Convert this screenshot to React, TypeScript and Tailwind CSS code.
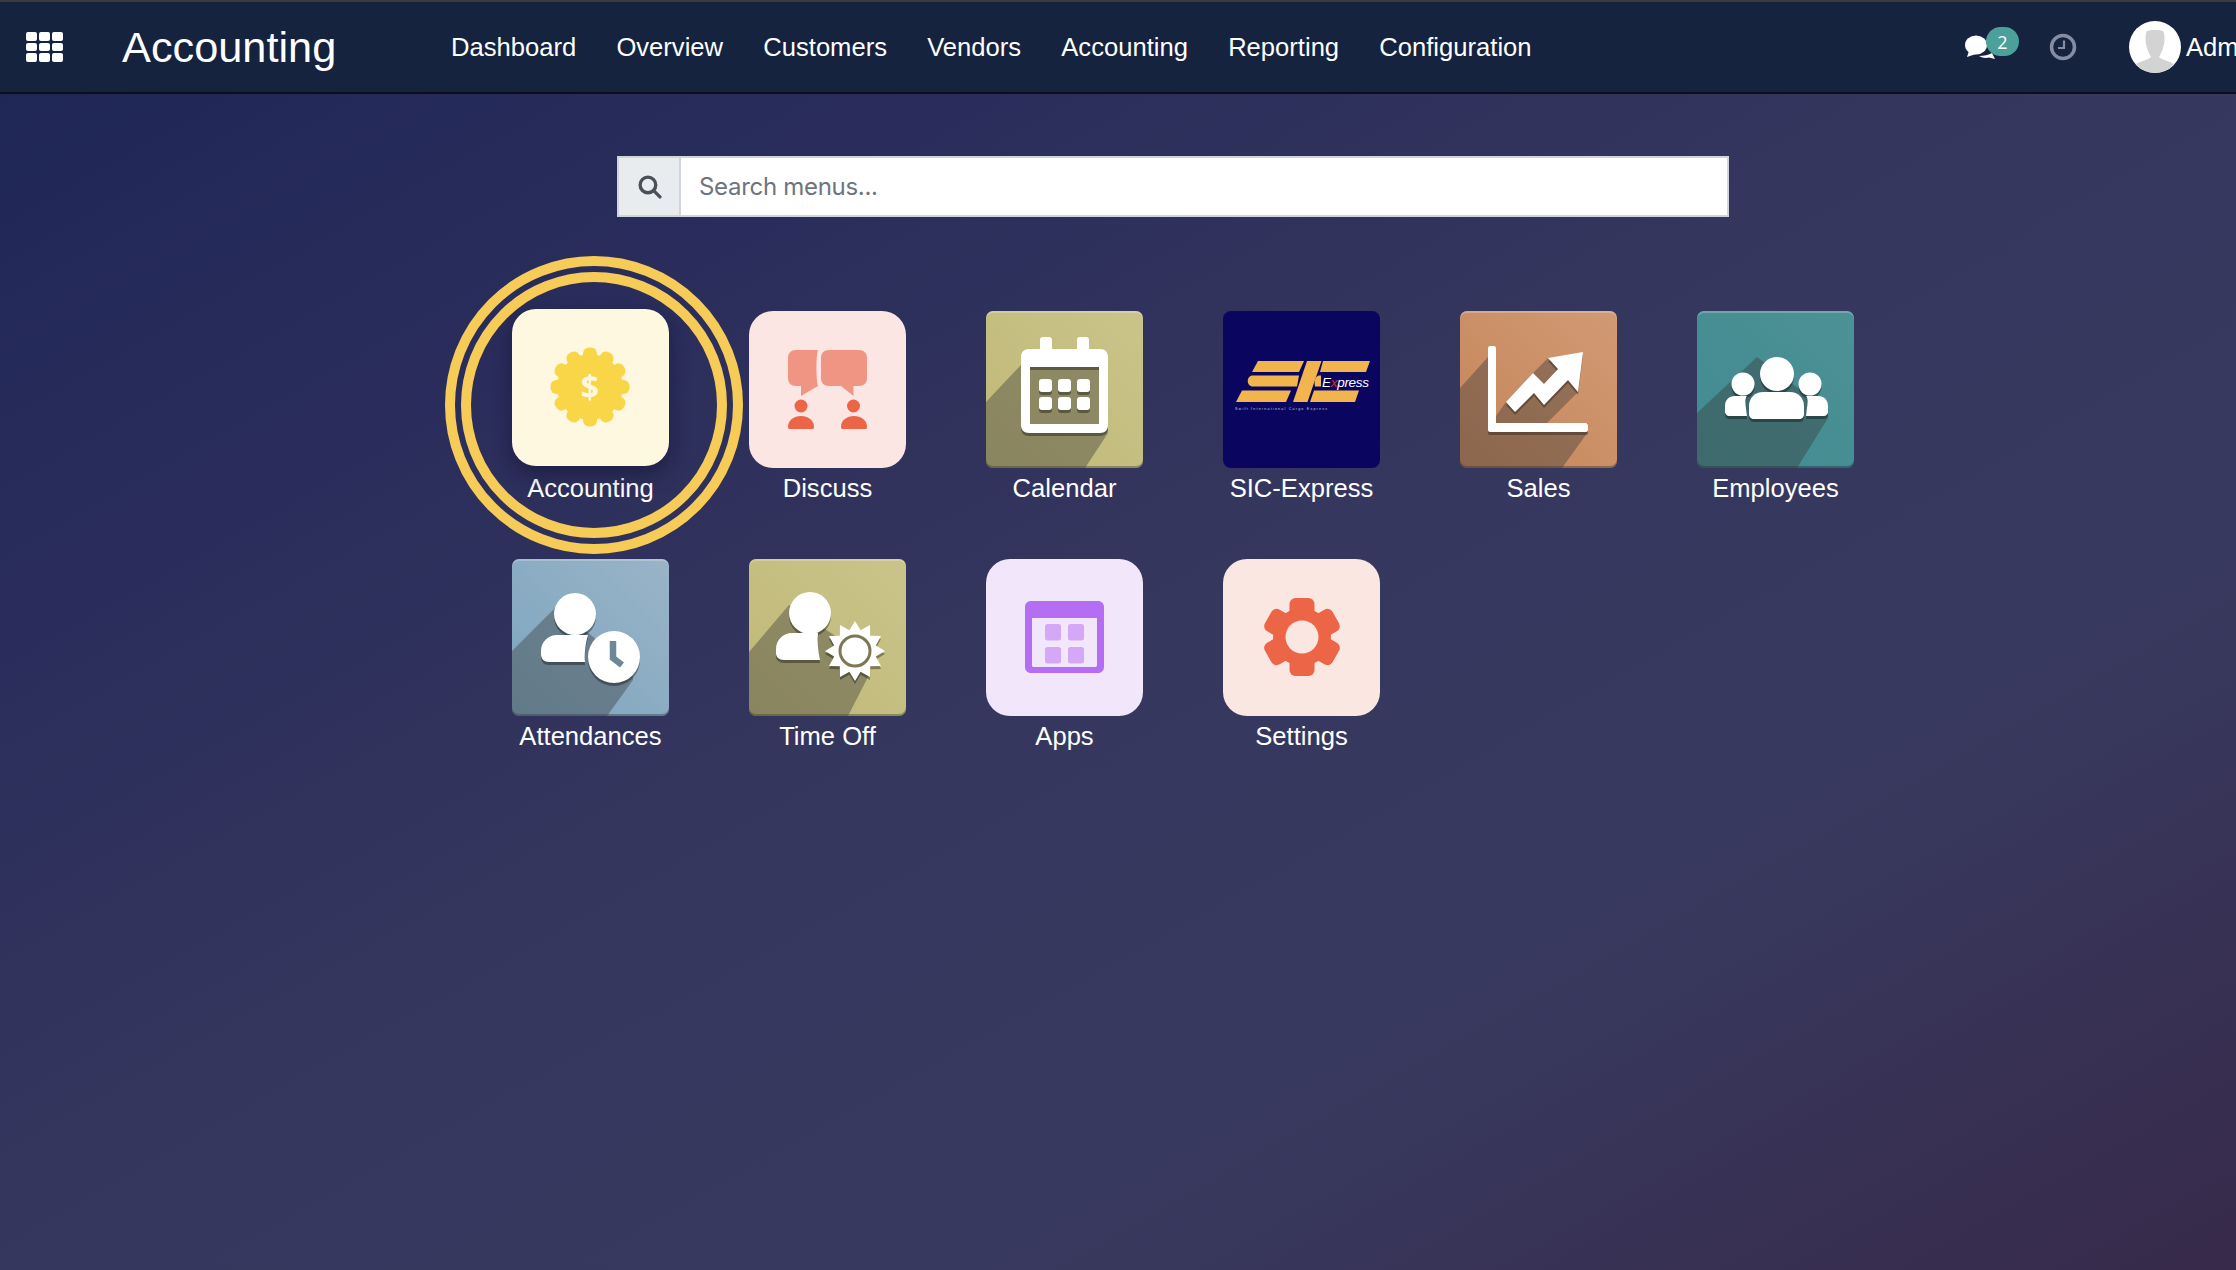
import React from "react";

const range = (n: number) => Array.from({ length: n }, (_, i) => i);

function Lifted({ children, dy = 3, opacity = 0.35 }: { children: React.ReactNode; dy?: number; opacity?: number }) {
  return (
    <>
      <g transform={`translate(0,${dy})`} fill="#000" fillOpacity={opacity}>{children}</g>
      <g fill="#fff">{children}</g>
    </>
  );
}

function Shadow({ points, opacity = 0.4 }: { points: string; opacity?: number }) {
  return <polygon points={points} fill="#3a3a3a" fillOpacity={opacity} />;
}

function Svg({ children }: { children: React.ReactNode }) {
  return (
    <svg viewBox="0 0 157 157" className="absolute inset-0 w-full h-full">
      {children}
    </svg>
  );
}

function AccountingIcon() {
  return (
    <Svg>
      <g fill="#f9d548">
        <circle cx="78" cy="78" r="33" />
        {range(12).map((i) => (
          <rect key={i} x="71" y="38.5" width="14" height="20" rx="6" transform={`rotate(${i * 30} 78 78)`} />
        ))}
      </g>
      <text x="78" y="89.5" textAnchor="middle" fontSize="32" fontWeight="700" fontFamily="'Open Sans', sans-serif" fill="#fff8e1">$</text>
    </Svg>
  );
}

function DiscussIcon() {
  return (
    <Svg>
      <path d="M47 39H69C67 44 67 68 69 75L52 85V75H47C42 75 39 72 39 67V47C39 42 42 39 47 39Z" fill="#f09584" />
      <path d="M80 39H110C115 39 118 42 118 47V67C118 72 115 75 110 75H104.5V85L92 75H80C75 75 72 72 72 67V47C72 42 75 39 80 39Z" fill="#f09584" />
      <g fill="#ec6547">
        <circle cx="52" cy="95" r="6.5" />
        <circle cx="104.5" cy="95" r="6.5" />
        <path d="M39 116C39 109 45 105 52 105C59 105 65 109 65 116C65 117.5 64.5 118 63 118H41C39.5 118 39 117.5 39 116Z" />
        <path d="M92 116C92 109 98 105 105 105C112 105 118 109 118 116C118 117.5 117.5 118 116 118H94C92.5 118 92 117.5 92 116Z" />
      </g>
    </Svg>
  );
}

function CalendarIcon() {
  const body = (
    <>
      <rect x="54" y="26" width="12" height="16" rx="3" />
      <rect x="91" y="26" width="12" height="16" rx="3" />
      <path fillRule="evenodd" d="M43 38H114C119 38 122 41 122 46V114C122 119 119 122 114 122H43C38 122 35 119 35 114V46C35 41 38 38 43 38ZM44 56V113H113V56Z" />
    </>
  );
  return (
    <Svg>
      <Shadow points="0,91 50,38 118,40 122,122 99,157 0,157" />
      <Lifted>{body}</Lifted>
      <Lifted>
        {[53, 72, 91].flatMap((x) =>
          [68, 86].map((y) => <rect key={`${x}-${y}`} x={x} y={y} width="13" height="13" rx="3" />)
        )}
      </Lifted>
    </Svg>
  );
}

function SicIcon() {
  const c = "#f2b54e";
  return (
    <Svg>
      <g fill={c}>
        <polygon points="35,50 81,50 76,61 29,61" />
        <path d="M30 64.5H76L74 75.5H30C23 75.5 23 64.5 30 64.5Z" />
        <polygon points="19,79.5 68,79.5 63,91 13,91" />
        <polygon points="84,50 98.5,50 84.5,91 70,91" />
        <polygon points="100,50 147,50 143,61 97,61" />
        <path d="M95.5 64.5H98V75.5H92C91 70 92 66 95.5 64.5Z" />
        <polygon points="91,79.5 136,79.5 132,91 87,91" />
      </g>
      <text x="99" y="76" fontSize="13.5" textLength="47" fontStyle="italic" fontFamily="'Liberation Sans', sans-serif" fill="#fff">
        E<tspan fill="#e2202a">x</tspan>press
      </text>
      <text x="12" y="99" fontSize="3.6" textLength="92" fontFamily="'Liberation Sans', sans-serif" fill="#c9c9df">Swift International Cargo Express</text>
    </Svg>
  );
}

function SalesIcon() {
  return (
    <Svg>
      <Shadow points="0,77 28,46 36,46 36,157 0,157" />
      <Shadow points="36,105 46,91 73,62 88,47 98,58 118,81 87,112 128,112 128,121 102,157 36,157" />
      <Lifted opacity={0.3}>
        <path d="M30 35H34C35 35 36 36 36 37V112H126C127 112 128 113 128 115V119C128 120 127 121 126 121H30C29 121 28 120 28 119V37C28 36 29 35 30 35Z" />
        <polygon points="88,47 123,41 118,81 108,69 84,94 74,82 55,101 46,91 73,62 84,73 98,58" />
      </Lifted>
    </Svg>
  );
}

function EmployeesIcon() {
  return (
    <Svg>
      <Shadow points="0,102 60,46 131,100 131,107 100,157 0,157" />
      <Lifted>
        <circle cx="80" cy="63" r="17" />
        <circle cx="46" cy="73" r="11.5" />
        <circle cx="113" cy="73" r="11.5" />
        <path d="M66 81H93C101 81 107 87 107 95V103C107 106 105 108 102 108H57C54 108 52 106 52 103V95C52 87 58 81 66 81Z" />
        <path d="M38 85H50C47 88 49 96 50 105H32C30 105 28 103 28 101V95C28 89 32 85 38 85Z" />
        <path d="M109 85H121C127 85 131 89 131 95V101C131 103 129 105 127 105H109C110 96 112 88 109 85Z" />
      </Lifted>
    </Svg>
  );
}

function AttendancesIcon() {
  return (
    <Svg>
      <Shadow points="0,92 44,48 121,110 121,121 95,157 0,157" />
      <Lifted>
        <circle cx="63" cy="55" r="21" />
        <path d="M45 76H76C74 82 72 95 73 103H37C32 103 29 100 29 95V92C29 83 36 76 45 76Z" />
        <circle cx="102" cy="98" r="26" />
      </Lifted>
      <polyline points="101,82 101,99 110,106" fill="none" stroke="#6d8798" strokeWidth="6.5" />
    </Svg>
  );
}

function TimeOffIcon() {
  const pts = range(24)
    .map((i) => {
      const a = (i * 15 * Math.PI) / 180 - Math.PI / 2;
      const r = i % 2 === 0 ? 30 : 21.5;
      return `${(106 + r * Math.cos(a)).toFixed(1)},${(92 + r * Math.sin(a)).toFixed(1)}`;
    })
    .join(" ");
  return (
    <Svg>
      <Shadow points="0,93 40,46 121,100 121,114 99,157 0,157" />
      <Lifted>
        <circle cx="61" cy="54" r="21" />
        <path d="M43 74H69C68 82 69 92 71 101H35C30 101 27 98 27 94V90C27 81 34 74 43 74Z" />
        <polygon points={pts} strokeLinejoin="round" />
      </Lifted>
      <circle cx="106" cy="92" r="15" fill="none" stroke="#7d7850" strokeWidth="3" />
    </Svg>
  );
}

function AppsIcon() {
  return (
    <Svg>
      <path fillRule="evenodd" fill="#b56ef3" d="M45 42H112C115.5 42 118 44.5 118 48V108C118 111.5 115.5 114 112 114H45C41.5 114 39 111.5 39 108V48C39 44.5 41.5 42 45 42ZM46 59V106C46 107.5 46.5 108 48 108H109C110.5 108 111 107.5 111 106V59Z" />
      <g fill="#d5a8f7">
        <rect x="59" y="65" width="16" height="16.5" rx="2.5" />
        <rect x="82" y="65" width="16" height="16.5" rx="2.5" />
        <rect x="59" y="88" width="16" height="16.5" rx="2.5" />
        <rect x="82" y="88" width="16" height="16.5" rx="2.5" />
      </g>
    </Svg>
  );
}

function SettingsIcon() {
  return (
    <Svg>
      <g fill="#ec6547">
        <circle cx="79" cy="78" r="29" />
        {range(6).map((i) => (
          <rect key={i} x="66.5" y="39" width="25" height="26" rx="6" transform={`rotate(${i * 60} 79 78)`} />
        ))}
      </g>
      <circle cx="79" cy="78" r="16.5" fill="#fbe7e2" />
    </Svg>
  );
}

type AppItem = { label: string; tile: string; icon: React.ReactNode };

const bevel = "shadow-[inset_0_2px_0_rgba(255,255,255,0.22),inset_0_-2px_0_rgba(0,0,0,0.28)]";

function Tile({ item }: { item: AppItem }) {
  return (
    <div className="flex flex-col items-center">
      <div className={`relative w-[157px] h-[157px] overflow-hidden ${item.tile}`}>{item.icon}</div>
      <div className="mt-[6px] text-[25.6px] leading-[28px] text-white whitespace-nowrap">{item.label}</div>
    </div>
  );
}

const row1: AppItem[] = [
  { label: "Discuss", tile: "rounded-[24px] bg-[#fbe6e3]", icon: <DiscussIcon /> },
  { label: "Calendar", tile: `rounded-[7px] bg-[linear-gradient(to_top_right,#bfb877,#cac48a)] ${bevel}`, icon: <CalendarIcon /> },
  { label: "SIC-Express", tile: "rounded-[8px] bg-[#0a0660]", icon: <SicIcon /> },
  { label: "Sales", tile: `rounded-[7px] bg-[linear-gradient(to_top_right,#c5855a,#d19a74)] ${bevel}`, icon: <SalesIcon /> },
  { label: "Employees", tile: `rounded-[7px] bg-[linear-gradient(to_top_right,#418b90,#4c9196)] ${bevel}`, icon: <EmployeesIcon /> },
];

const row2: AppItem[] = [
  { label: "Attendances", tile: `rounded-[7px] bg-[linear-gradient(to_top_right,#7ca6bf,#9ab3c7)] ${bevel}`, icon: <AttendancesIcon /> },
  { label: "Time Off", tile: `rounded-[7px] bg-[linear-gradient(to_top_right,#bfb877,#cac48a)] ${bevel}`, icon: <TimeOffIcon /> },
  { label: "Apps", tile: "rounded-[24px] bg-[#f2e6fb]", icon: <AppsIcon /> },
  { label: "Settings", tile: "rounded-[24px] bg-[#fbe7e2]", icon: <SettingsIcon /> },
];

const navItems = ["Dashboard", "Overview", "Customers", "Vendors", "Accounting", "Reporting", "Configuration"];

function GridMenuIcon() {
  return (
    <div className="grid grid-cols-3 gap-x-[2px] gap-y-[2px] w-[37px]">
      {range(9).map((i) => (
        <div key={i} className="h-[8.5px] rounded-[2px] bg-white" />
      ))}
    </div>
  );
}

export default function App() {
  return (
    <div className="h-[1270px] w-[2236px] overflow-hidden flex flex-col bg-[linear-gradient(to_bottom_right,#1d2656_0%,#2a2d5b_25%,#36375e_50%,#38395f_72%,#372a4a_100%)] [font-family:'Liberation_Sans',sans-serif]">
      <header className="h-[94px] shrink-0 flex items-center bg-[#15233f] border-t-2 border-b-2 border-t-[#3c3c3c] border-b-[#0b0f1c] text-white">
        <div className="ml-[26px] shrink-0">
          <GridMenuIcon />
        </div>
        <div className="ml-[59px] w-[329px] shrink-0 text-[43.3px] leading-[48px]">Accounting</div>
        <nav className="flex gap-[40.2px] flex-1 min-w-0 text-[25.6px] leading-[30px]">
          {navItems.map((n) => (
            <span key={n} className="whitespace-nowrap">{n}</span>
          ))}
        </nav>
        <div className="w-[271px] shrink-0 flex items-center overflow-hidden">
          <div className="relative w-[54px] h-[40px] shrink-0">
            <svg viewBox="0 0 34 26" className="absolute left-0 top-[7px] w-[34px] h-[26px]" fill="#fff">
              <ellipse cx="11" cy="11" rx="11" ry="9.5" />
              <path d="M4 17L2 23L11 20Z" />
              <path d="M14 22C19 22 24 21 27 19L30 25L24 23.5C21 24.5 17 24 14 22Z" />
            </svg>
            <div className="absolute left-[21px] top-0 w-[33px] h-[29px] rounded-full bg-[#4ba09b] flex items-center justify-center text-[18px] leading-none [font-family:'Open_Sans',sans-serif] text-white">
              2
            </div>
          </div>
          <svg viewBox="0 0 28 28" className="ml-[30px] w-[28px] h-[28px] shrink-0" fill="none" stroke="#868da0">
            <circle cx="14" cy="14" r="11.5" strokeWidth="3.5" />
            <path d="M15 7.5V15H9" strokeWidth="2.2" />
          </svg>
          <div className="ml-[52px] relative w-[52px] h-[52px] shrink-0 rounded-full bg-white overflow-hidden">
            <svg viewBox="0 0 52 52" className="absolute inset-0 w-full h-full" fill="#d3d3d3">
              <path d="M18 10C20 8.5 32 8.5 34 10C36 13 36 21 34 27C33 31 31 34 30 36C33 39 40 40 45 43C40 49 33 52 26 52C19 52 12 49 7 43C12 40 19 39 22 36C21 34 19 31 18 27C16 21 16 13 18 10Z" />
            </svg>
          </div>
          <span className="ml-[5px] shrink-0 text-[25.6px] leading-[30px] whitespace-nowrap">Admin</span>
        </div>
      </header>

      <main className="flex flex-col">
        <div className="ml-[617px] mt-[62px] w-[1112px] h-[61px] flex border-2 border-[#ced4da] bg-white">
          <div className="w-[62px] shrink-0 flex items-center justify-center bg-[#e9ecef] border-r-2 border-[#ced4da]">
            <svg viewBox="0 0 24 24" className="w-[25px] h-[25px]" fill="none" stroke="#495057" strokeWidth="3.2" strokeLinecap="round">
              <circle cx="10.5" cy="10.5" r="7.5" />
              <path d="M16 16L22 22" />
            </svg>
          </div>
          <div className="pl-[18px] flex items-center text-[24px] tracking-[-0.3px] text-[#6c757d] [font-family:Inter,sans-serif]">
            Search menus...
          </div>
        </div>

        <div className="ml-[472px] mt-[94px] grid grid-cols-[repeat(6,237px)] auto-rows-[248px]">
          <div className="relative">
            <div className="relative -top-[2px] flex flex-col items-center">
              <div className="w-[157px] h-[157px] relative rounded-[24px] bg-[#fff8e1] overflow-hidden shadow-[0_8px_20px_rgba(10,12,40,0.45)]">
                <AccountingIcon />
              </div>
              <div className="mt-[8px] text-[25.6px] leading-[28px] text-white whitespace-nowrap">Accounting</div>
            </div>
            <div className="absolute left-[-27px] top-[-55px] w-[298px] h-[298px] rounded-full border-[10px] border-[#f6cb58] flex items-center justify-center pointer-events-none">
              <div className="w-[266px] h-[266px] rounded-full border-[10px] border-[#f6cb58]" />
            </div>
          </div>
          {row1.map((item) => (
            <Tile key={item.label} item={item} />
          ))}
          {row2.map((item) => (
            <Tile key={item.label} item={item} />
          ))}
        </div>
      </main>
    </div>
  );
}
